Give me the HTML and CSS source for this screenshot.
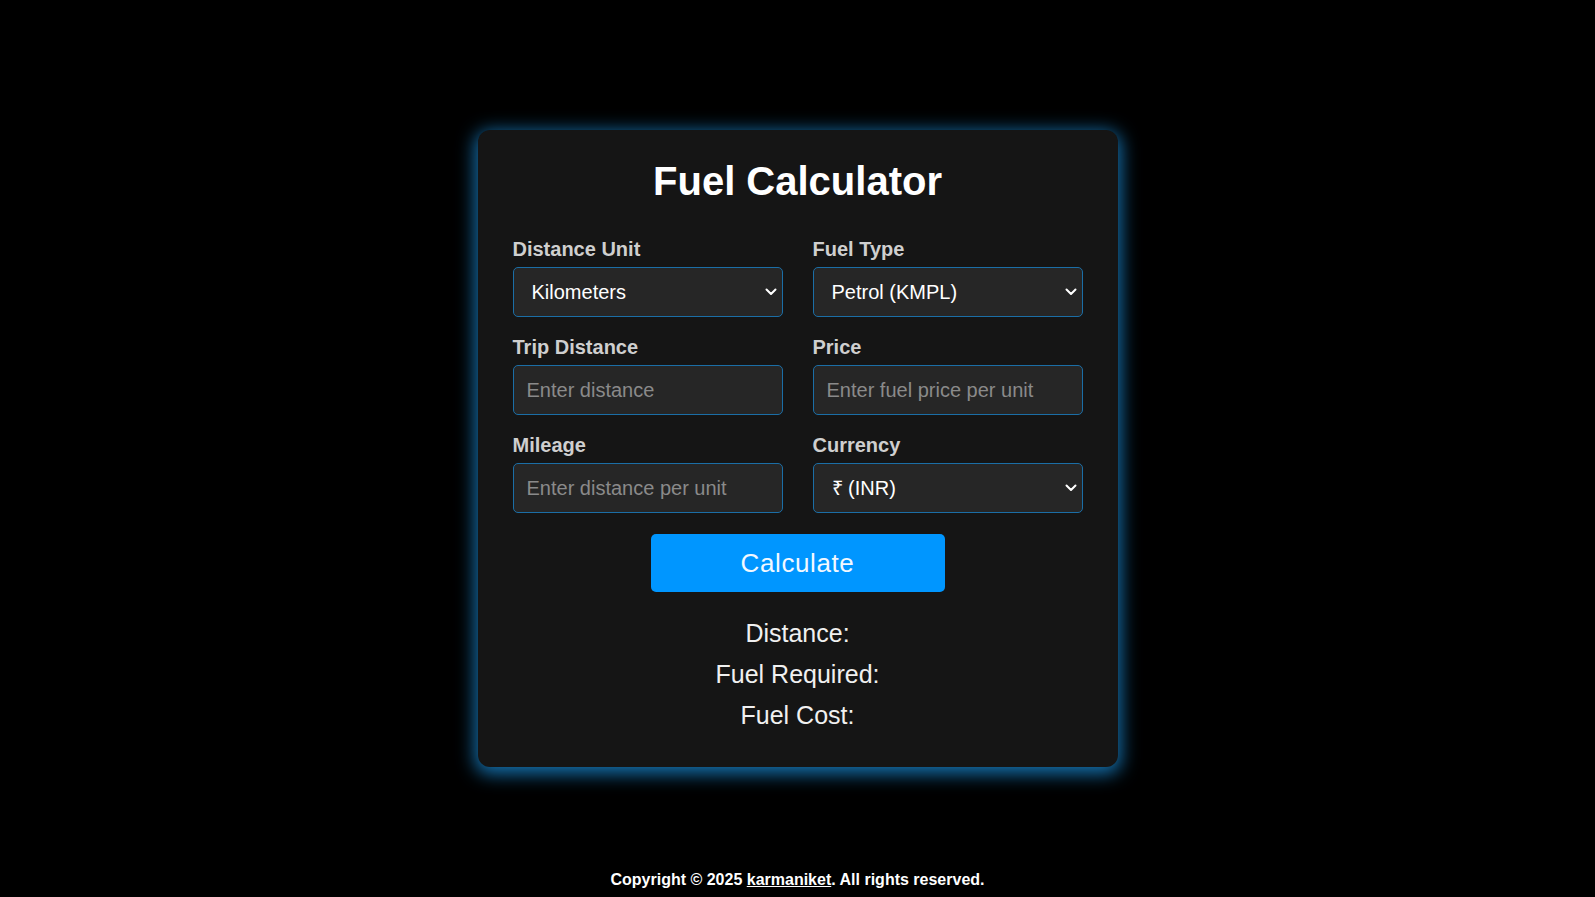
FILE: index.html
```html
<!DOCTYPE html>
<html lang="en">
<head>
<meta charset="UTF-8">
<title>Fuel Calculator</title>
<link rel="stylesheet" href="styles.css">
</head>
<body>
<div class="page">
  <main class="card">
    <h1 class="title">Fuel Calculator</h1>
    <div class="form-grid">
      <div class="field">
        <label class="field-label" for="unit">Distance Unit</label>
        <div class="select-wrap">
          <select id="unit" class="control control-select">
            <option>Kilometers</option>
            <option>Miles</option>
          </select>
          <svg class="chevron" viewBox="0 0 12 8" width="12" height="8" aria-hidden="true"><path d="M1.5 1.5 L6 6 L10.5 1.5" fill="none" stroke="#fff" stroke-width="2" stroke-linecap="round" stroke-linejoin="round"/></svg>
        </div>
      </div>
      <div class="field">
        <label class="field-label" for="fuel">Fuel Type</label>
        <div class="select-wrap">
          <select id="fuel" class="control control-select">
            <option>Petrol (KMPL)</option>
            <option>Diesel (KMPL)</option>
          </select>
          <svg class="chevron" viewBox="0 0 12 8" width="12" height="8" aria-hidden="true"><path d="M1.5 1.5 L6 6 L10.5 1.5" fill="none" stroke="#fff" stroke-width="2" stroke-linecap="round" stroke-linejoin="round"/></svg>
        </div>
      </div>
      <div class="field">
        <label class="field-label" for="dist">Trip Distance</label>
        <input id="dist" class="control" type="number" placeholder="Enter distance">
      </div>
      <div class="field">
        <label class="field-label" for="price">Price</label>
        <input id="price" class="control" type="number" placeholder="Enter fuel price per unit">
      </div>
      <div class="field">
        <label class="field-label" for="mileage">Mileage</label>
        <input id="mileage" class="control" type="number" placeholder="Enter distance per unit">
      </div>
      <div class="field">
        <label class="field-label" for="cur">Currency</label>
        <div class="select-wrap">
          <select id="cur" class="control control-select">
            <option>₹ (INR)</option>
            <option>$ (USD)</option>
          </select>
          <svg class="chevron" viewBox="0 0 12 8" width="12" height="8" aria-hidden="true"><path d="M1.5 1.5 L6 6 L10.5 1.5" fill="none" stroke="#fff" stroke-width="2" stroke-linecap="round" stroke-linejoin="round"/></svg>
        </div>
      </div>
    </div>
    <button class="calc-btn" type="button">Calculate</button>
    <div class="results">
      <p class="result-line">Distance:</p>
      <p class="result-line">Fuel Required:</p>
      <p class="result-line">Fuel Cost:</p>
    </div>
  </main>
  <footer class="footer">Copyright © 2025 <a class="footer-link" href="#">karmaniket</a>. All rights reserved.</footer>
</div>
</body>
</html>
```

FILE: styles.css
```css
* {
  box-sizing: border-box;
}

html, body {
  margin: 0;
  padding: 0;
  background: #000;
}

body {
  font-family: "Liberation Sans", Arial, sans-serif;
  color: #fff;
}

.page {
  height: 100vh;
  display: grid;
  grid-template-rows: 1fr auto 1fr;
  justify-items: center;
}

.card {
  grid-row: 2;
  width: 640px;
  padding: 28px 35px 38px;
  background: #151515;
  border-radius: 12px;
  box-shadow: 0 4px 18px 3px rgba(30, 160, 245, 0.7);
}

.title {
  margin: 0 0 34px;
  font-size: 40px;
  font-weight: bold;
  line-height: 46px;
  text-align: center;
  color: #fff;
}

.form-grid {
  display: grid;
  grid-template-columns: 270px 270px;
  column-gap: 30px;
  row-gap: 19px;
}

.field {
  display: flex;
  flex-direction: column;
}

.field-label {
  font-size: 20px;
  font-weight: bold;
  line-height: 23px;
  color: #cfcfcf;
  margin-bottom: 6px;
}

.select-wrap {
  position: relative;
}

.control {
  display: block;
  height: 50px;
  width: 100%;
  padding: 0 13px;
  font-family: "Liberation Sans", Arial, sans-serif;
  font-size: 20px;
  color: #fff;
  background: #262626;
  border: 1px solid #1b6ea6;
  border-radius: 5px;
  outline: none;
}

.control::placeholder {
  color: #8a8a8a;
}

.control-select {
  appearance: none;
  -webkit-appearance: none;
  padding: 0 30px 0 18px;
}

.chevron {
  position: absolute;
  right: 6px;
  top: 21px;
  pointer-events: none;
}

.calc-btn {
  display: block;
  margin: 21px auto 0;
  width: 294px;
  height: 58px;
  font-family: "Liberation Sans", Arial, sans-serif;
  font-size: 26px;
  letter-spacing: 0.6px;
  color: #f2f8ff;
  background: #0096ff;
  border: none;
  border-radius: 5px;
}

.results {
  margin-top: 27px;
  text-align: center;
}

.result-line {
  margin: 0 0 13px;
  font-size: 25px;
  line-height: 28px;
  color: #f0f0f0;
}

.result-line:last-child {
  margin-bottom: 0;
}

.footer {
  grid-row: 3;
  align-self: end;
  padding-bottom: 8px;
  font-size: 16px;
  font-weight: bold;
  color: #fff;
  text-align: center;
}

.footer-link {
  color: #fff;
  text-decoration: underline;
}
```
